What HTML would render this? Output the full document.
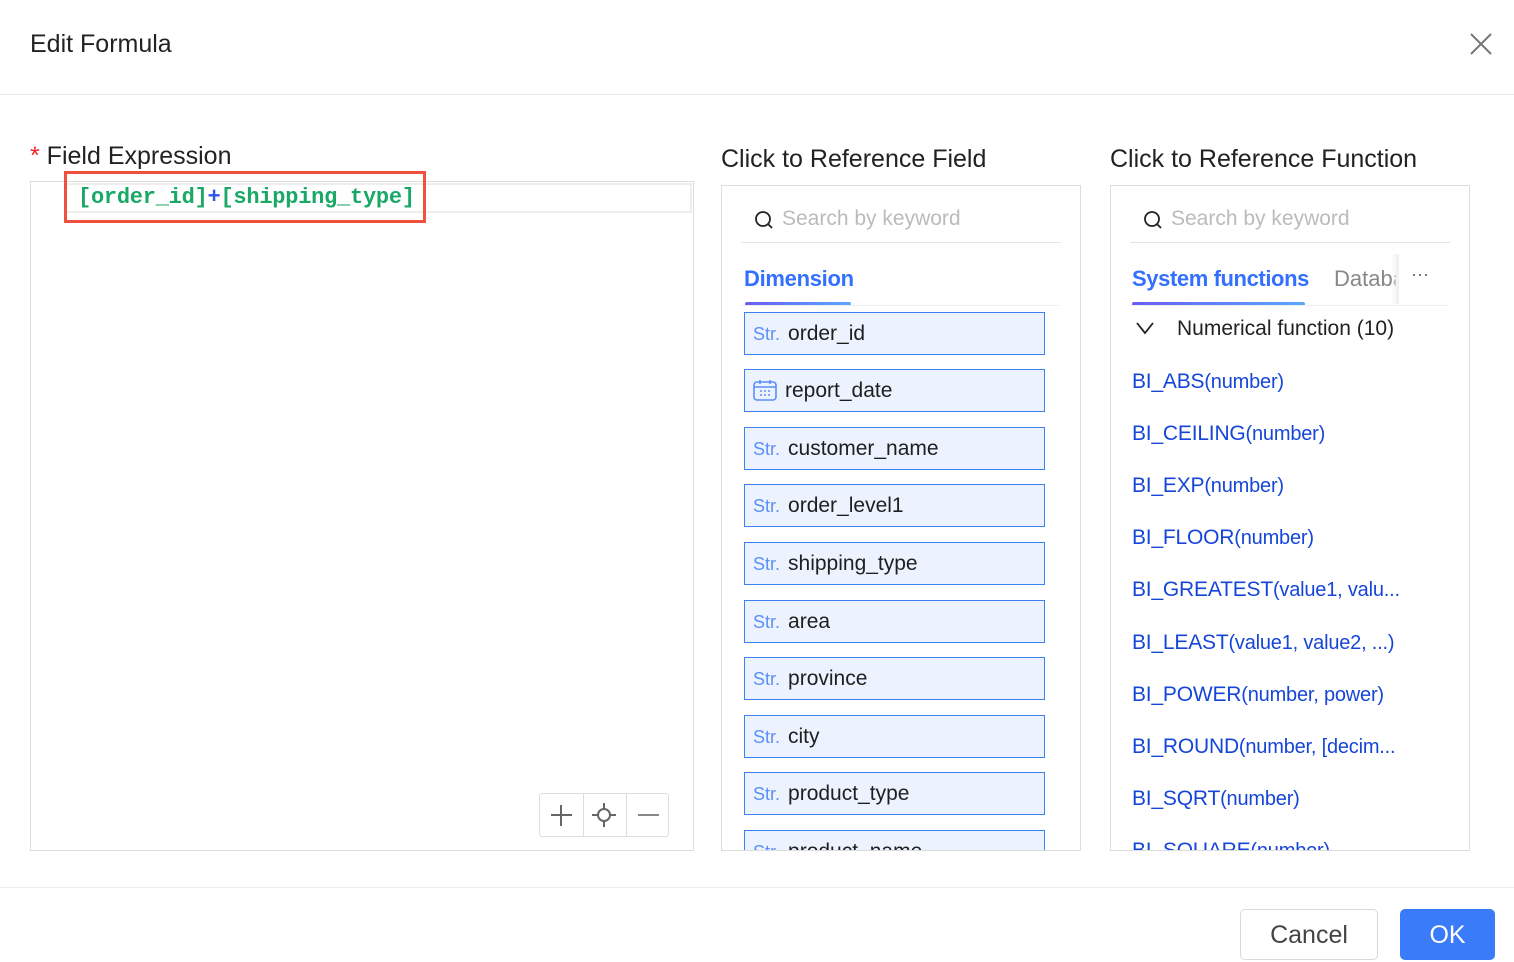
<!DOCTYPE html>
<html><head><meta charset="utf-8"><style>
*{box-sizing:border-box;margin:0;padding:0}
body{width:1514px;height:962px;background:#fff;font-family:"Liberation Sans",sans-serif;position:relative;overflow:hidden;color:#222}
.a{position:absolute}
.fi{position:absolute;left:744px;width:301px;height:43px;border:1px solid #3b82f6;background:#ecf3ff;font-size:21px;line-height:42px;padding-left:8px;color:#1f1f1f}
.fi s{text-decoration:none;color:#5b8ff9;font-size:18px;margin-right:8px}
.fn{position:absolute;left:1132px;font-size:21px;color:#1546d8;line-height:26px;letter-spacing:-0.2px}
.fn span{font-size:20px}
.clip{position:absolute;overflow:hidden}
</style></head><body>
<div class="a" style="left:30px;top:30px;font-size:25px;color:#222">Edit Formula</div>
<svg class="a" style="left:1469px;top:32px" width="24" height="24"><path d="M2 2L22 22M22 2L2 22" stroke="#777" stroke-width="2"/></svg>
<div class="a" style="left:0;top:94px;width:1514px;height:1px;background:#e8e8e8"></div>

<div class="a" style="left:30px;top:142px;font-size:25px"><span style="color:#f5222d">*</span> Field Expression</div>
<div class="a" style="left:30px;top:181px;width:664px;height:670px;border:1px solid #ddd"></div>
<div class="a" style="left:66px;top:183px;width:626px;height:30px;border:2px solid #eee;border-left:none"></div>
<div class="a" style="left:64px;top:171px;width:362px;height:52px;border:3px solid #f0513f"></div>
<div class="a" style="left:78px;top:185px;font-family:'Liberation Mono',monospace;font-weight:bold;font-size:22px;letter-spacing:-0.25px;color:#1aa866">[order_id]<span style="color:#2f54eb">+</span>[shipping_type]</div>
<div class="a" style="left:539px;top:793px;width:130px;height:44px;border:1px solid #ddd;border-radius:3px;background:#fff"></div>
<div class="a" style="left:583px;top:794px;width:1px;height:42px;background:#ddd"></div>
<div class="a" style="left:626px;top:794px;width:1px;height:42px;background:#ddd"></div>
<svg class="a" style="left:539px;top:793px" width="130" height="44"><path d="M22 12V33M12 22H33" stroke="#666" stroke-width="2"/><circle cx="65" cy="22" r="6" fill="none" stroke="#666" stroke-width="2"/><path d="M65 10v6M65 28v6M53 22h6M71 22h6" stroke="#666" stroke-width="2"/><path d="M99 22H120" stroke="#888" stroke-width="2"/></svg>

<div class="a" style="left:721px;top:145px;font-size:25px">Click to Reference Field</div>
<div class="clip" style="left:721px;top:185px;width:360px;height:666px;border:1px solid #ddd">
<div class="a" style="left:19px;top:56px;width:320px;height:1px;background:#e5e5e5"></div>
<svg class="a" style="left:32px;top:24px" width="20" height="20"><circle cx="9" cy="9" r="7" fill="none" stroke="#222" stroke-width="1.8"/><path d="M14 14l4 4" stroke="#222" stroke-width="1.8"/></svg>
<div class="a" style="left:60px;top:21px;font-size:21px;color:#bbb">Search by keyword</div>
<div class="a" style="left:22px;top:80px;font-size:22px;color:#3370ff;font-weight:bold;letter-spacing:-0.3px">Dimension</div>
<div class="a" style="left:23px;top:116px;width:106px;height:4px;border-radius:2px;background:linear-gradient(90deg,#6a5cf5,#5aa8ff)"></div>
<div class="a" style="left:19px;top:119px;width:318px;height:1px;background:#eee"></div>
</div>
<div class="clip" style="left:722px;top:300px;width:358px;height:550px">
<div class="fi" style="left:22px;top:12px"><s>Str.</s>order_id</div>
<div class="fi" style="left:22px;top:69px"><svg style="vertical-align:-4px;margin-right:8px" width="24" height="22"><rect x="1" y="3" width="22" height="18" rx="3" fill="none" stroke="#5b8ff9" stroke-width="1.6"/><path d="M1 8H23M7 1v4M17 1v4" stroke="#5b8ff9" stroke-width="1.6"/><path d="M7 12h2M11 12h2M15 12h2M7 16h2M11 16h2M15 16h2" stroke="#5b8ff9" stroke-width="1.5"/></svg>report_date</div>
<div class="fi" style="left:22px;top:127px"><s>Str.</s>customer_name</div>
<div class="fi" style="left:22px;top:184px"><s>Str.</s>order_level1</div>
<div class="fi" style="left:22px;top:242px"><s>Str.</s>shipping_type</div>
<div class="fi" style="left:22px;top:300px"><s>Str.</s>area</div>
<div class="fi" style="left:22px;top:357px"><s>Str.</s>province</div>
<div class="fi" style="left:22px;top:415px"><s>Str.</s>city</div>
<div class="fi" style="left:22px;top:472px"><s>Str.</s>product_type</div>
<div class="fi" style="left:22px;top:530px"><s>Str.</s>product_name</div>
</div>

<div class="a" style="left:1110px;top:145px;font-size:25px">Click to Reference Function</div>
<div class="clip" style="left:1110px;top:185px;width:360px;height:666px;border:1px solid #ddd">
<div class="a" style="left:19px;top:56px;width:320px;height:1px;background:#e5e5e5"></div>
<svg class="a" style="left:32px;top:24px" width="20" height="20"><circle cx="9" cy="9" r="7" fill="none" stroke="#222" stroke-width="1.8"/><path d="M14 14l4 4" stroke="#222" stroke-width="1.8"/></svg>
<div class="a" style="left:60px;top:21px;font-size:21px;color:#bbb">Search by keyword</div>
<div class="a" style="left:21px;top:80px;font-size:22px;color:#3370ff;font-weight:bold;letter-spacing:-0.4px">System functions</div>
<div class="a" style="left:223px;top:80px;width:62px;overflow:hidden;white-space:nowrap;font-size:22px;color:#888">Database</div>
<div class="a" style="left:280px;top:68px;width:8px;height:50px;background:linear-gradient(90deg,#fff0,#eee)"></div>
<div class="a" style="left:300px;top:78px;font-size:18px;color:#666">···</div>
<div class="a" style="left:21px;top:116px;width:173px;height:4px;border-radius:2px;background:linear-gradient(90deg,#6a5cf5,#5aa8ff)"></div>
<div class="a" style="left:19px;top:119px;width:318px;height:1px;background:#eee"></div>
<svg class="a" style="left:24px;top:135px" width="20" height="14"><path d="M2 2L10 12L18 2" fill="none" stroke="#222" stroke-width="1.8"/></svg>
<div class="a" style="left:66px;top:131px;font-size:21px;color:#222">Numerical function (10)</div>
</div>
<div class="clip" style="left:1111px;top:186px;width:358px;height:664px">
<div class="fn" style="left:21px;top:183px">BI_ABS<span>(number)</span></div>
<div class="fn" style="left:21px;top:235px">BI_CEILING<span>(number)</span></div>
<div class="fn" style="left:21px;top:287px">BI_EXP<span>(number)</span></div>
<div class="fn" style="left:21px;top:339px">BI_FLOOR<span>(number)</span></div>
<div class="fn" style="left:21px;top:391px">BI_GREATEST<span>(value1, valu...</span></div>
<div class="fn" style="left:21px;top:444px">BI_LEAST<span>(value1, value2, ...)</span></div>
<div class="fn" style="left:21px;top:496px">BI_POWER<span>(number, power)</span></div>
<div class="fn" style="left:21px;top:548px">BI_ROUND<span>(number, [decim...</span></div>
<div class="fn" style="left:21px;top:600px">BI_SQRT<span>(number)</span></div>
<div class="fn" style="left:21px;top:652px">BI_SQUARE<span>(number)</span></div>
</div>

<div class="a" style="left:0;top:887px;width:1514px;height:1px;background:#eee"></div>
<div class="a" style="left:1240px;top:909px;width:138px;height:51px;border:1px solid #d9d9d9;border-radius:5px;font-size:25px;color:#444;text-align:center;line-height:51px">Cancel</div>
<div class="a" style="left:1400px;top:909px;width:95px;height:51px;border-radius:5px;background:#3a7bfa;font-size:25px;color:#fff;text-align:center;line-height:53px">OK</div>
</body></html>
